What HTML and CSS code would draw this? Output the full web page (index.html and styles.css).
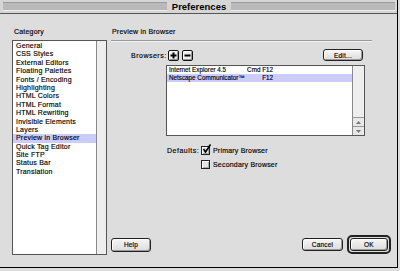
FILE: index.html
```html
<!DOCTYPE html>
<html>
<head>
<meta charset="utf-8">
<link rel="stylesheet" href="styles.css">
</head>
<body>
<div class="window">
  <div class="titlebar">
    <div class="stripe"></div>
    <div class="title">Preferences</div>
    <div class="stripe"></div>
  </div>
  <div class="main">
    <div class="leftcol">
      <div class="label">Category</div>
      <div class="listbox cat">
        <ul class="items">
          <li>General</li>
          <li>CSS Styles</li>
          <li>External Editors</li>
          <li>Floating Palettes</li>
          <li>Fonts / Encoding</li>
          <li>Highlighting</li>
          <li>HTML Colors</li>
          <li>HTML Format</li>
          <li>HTML Rewriting</li>
          <li>Invisible Elements</li>
          <li>Layers</li>
          <li class="sel">Preview in Browser</li>
          <li>Quick Tag Editor</li>
          <li>Site FTP</li>
          <li>Status Bar</li>
          <li>Translation</li>
        </ul>
        <div class="vscroll"></div>
      </div>
    </div>
    <div class="rightcol">
      <div class="label">Preview in Browser</div>
      <div class="groove"></div>
      <div class="browsers-row">
        <span class="blabel">Browsers:</span>
        <span class="sq"><svg width="9" height="9" viewBox="0 0 9 9"><path d="M4.5 1.5V7.5M1.5 4.5H7.5" stroke="#000" stroke-width="2"/></svg></span>
        <span class="sq"><svg width="9" height="9" viewBox="0 0 9 9"><path d="M1.5 4.5H7.5" stroke="#000" stroke-width="2"/></svg></span>
        <span class="btn edit">Edit...</span>
      </div>
      <div class="listbox blist">
        <div class="bitems">
          <div class="brow"><span>Internet Explorer 4.5</span><span class="key">Cmd F12</span></div>
          <div class="brow sel"><span>Netscape Communicator™</span><span class="key">F12</span></div>
        </div>
        <div class="vscroll arrows">
          <div class="arrow"><svg width="7" height="5" viewBox="0 0 7 5"><path d="M3.5 1L6 4H1Z" fill="#777"/></svg></div>
          <div class="arrow"><svg width="7" height="5" viewBox="0 0 7 5"><path d="M1 1H6L3.5 4Z" fill="#777"/></svg></div>
        </div>
      </div>
      <div class="defaults">
        <span class="dlabel">Defaults:</span>
        <span class="check"><svg width="11" height="11" viewBox="0 0 11 11"><path d="M2.5 5L4.5 8L9.5 0.5" stroke="#000" stroke-width="1.6" fill="none"/></svg></span>
        <span class="clabel">Primary Browser</span>
      </div>
      <div class="defaults second">
        <span class="check"></span>
        <span class="clabel">Secondary Browser</span>
      </div>
      <div class="footer">
        <span class="btn help">Help</span>
        <span class="btn cancel">Cancel</span>
        <span class="ring"><span class="btn ok">OK</span></span>
      </div>
    </div>
  </div>
</div>
</body>
</html>
```
FILE: styles.css
```css
html, body {
  margin: 0;
  padding: 0;
  background: #dcdcdc;
}
body {
  width: 400px;
  height: 271px;
  overflow: hidden;
  font-family: "Liberation Sans", Arial, sans-serif;
  font-size: 7px;
  letter-spacing: 0.2px;
  color: #000;
  -webkit-text-stroke: 0.15px #000;
}
.window {
  width: 397px;
  height: 267px;
  border-right: 1px solid #000;
  border-bottom: 1px solid #000;
  background: #dddddd;
  display: flex;
  flex-direction: column;
}
.titlebar {
  height: 13px;
  border-bottom: 1px solid #555;
  background: #d6d6d6;
  display: flex;
  align-items: center;
  gap: 5px;
  padding: 0 2px 0 3px;
}
.stripe {
  flex: 1;
  height: 7px;
  background: #b9b9b9;
  border-top: 1px solid #9c9c9c;
  border-bottom: 1px solid #ececec;
}
.title {
  font-size: 9.5px;
  font-weight: bold;
  letter-spacing: 0;
  line-height: 13px;
  -webkit-text-stroke: 0;
}
.main {
  flex: 1;
  display: flex;
  gap: 4px;
  padding: 13px 6px 0 12px;
}
.leftcol {
  width: 95px;
  display: flex;
  flex-direction: column;
}
.label {
  height: 10px;
  line-height: 10px;
  padding-left: 2px;
  margin-bottom: 3px;
}
.listbox {
  box-sizing: border-box;
  border: 1px solid #555;
  background: #fff;
  display: flex;
}
.cat {
  height: 215px;
}
.items {
  list-style: none;
  margin: 0;
  padding: 1px 0 0 0;
  flex: 1;
}
.items li {
  height: 8.4px;
  line-height: 8.4px;
  padding-left: 3px;
  white-space: nowrap;
}
.sel {
  background: #ccccff;
}
.vscroll {
  width: 9px;
  border-left: 1px solid #888;
  background: #eeeeee;
}
.rightcol {
  flex: 1;
  display: flex;
  flex-direction: column;
  padding-bottom: 13px;
}
.rightcol .label {
  margin-bottom: 3px;
  padding-left: 1px;
}
.groove {
  width: 261px;
  height: 0;
  border-top: 1px solid #9a9a9a;
  border-bottom: 1px solid #f2f2f2;
}
.browsers-row {
  margin-top: 7px;
  height: 12px;
  display: flex;
  align-items: center;
}
.blabel {
  margin-left: 20px;
  width: 37px;
  letter-spacing: 0.5px;
}
.sq {
  box-sizing: border-box;
  width: 11px;
  height: 11px;
  border: 1px solid #111;
  border-radius: 2px;
  background: #eee;
  box-shadow: inset 1px 1px #fff, inset -1px -1px #999;
  display: flex;
  align-items: center;
  justify-content: center;
  margin-right: 3px;
  margin-top: 1px;
}
.btn {
  box-sizing: border-box;
  border: 1px solid #222;
  border-radius: 3px;
  background: linear-gradient(#f6f6f6, #dcdcdc);
  box-shadow: inset 1px 1px #fff, inset -1px -1px #9a9a9a;
  display: flex;
  align-items: center;
  justify-content: center;
  font-size: 6.5px;
}
.edit {
  width: 40px;
  height: 12px;
  margin-left: auto;
  margin-right: 28px;
}
.blist {
  margin-top: 4px;
  margin-left: 55px;
  width: 199px;
  height: 71px;
}
.bitems {
  flex: 1;
}
.brow {
  height: 8px;
  line-height: 8px;
  display: grid;
  grid-template-columns: 78px 26px;
  padding-left: 2px;
  white-space: nowrap;
  font-size: 6.3px;
  letter-spacing: 0;
}
.key {
  text-align: right;
}
.blist .vscroll {
  width: 11px;
}
.arrows {
  display: flex;
  flex-direction: column;
  justify-content: flex-end;
}
.arrow {
  height: 8px;
  border-top: 1px solid #999;
  display: flex;
  align-items: center;
  justify-content: center;
  background: #e8e8e8;
}
.defaults {
  margin-top: 10px;
  height: 9px;
  display: flex;
  align-items: center;
}
.dlabel {
  margin-left: 56px;
  width: 34px;
  letter-spacing: 0.5px;
}
.check {
  box-sizing: border-box;
  width: 9px;
  height: 9px;
  border: 1px solid #222;
  background: #e4e4e4;
  box-shadow: inset 1px 1px #fff, inset -1px -1px #aaa;
  position: relative;
}
.check svg {
  position: absolute;
  left: -1px;
  top: -3px;
}
.clabel {
  margin-left: 3px;
}
.second {
  margin-top: 5px;
  padding-left: 90px;
}
.footer {
  margin-top: auto;
  height: 19px;
  display: flex;
  align-items: center;
  gap: 4px;
}
.help {
  width: 40px;
  height: 14px;
}
.cancel {
  margin-left: auto;
  width: 41px;
  height: 13px;
}
.ring {
  box-sizing: border-box;
  width: 44px;
  height: 19px;
  border: 2px solid #222;
  border-radius: 5px;
  padding: 1px;
  display: flex;
}
.ok {
  flex: 1;
}
```
